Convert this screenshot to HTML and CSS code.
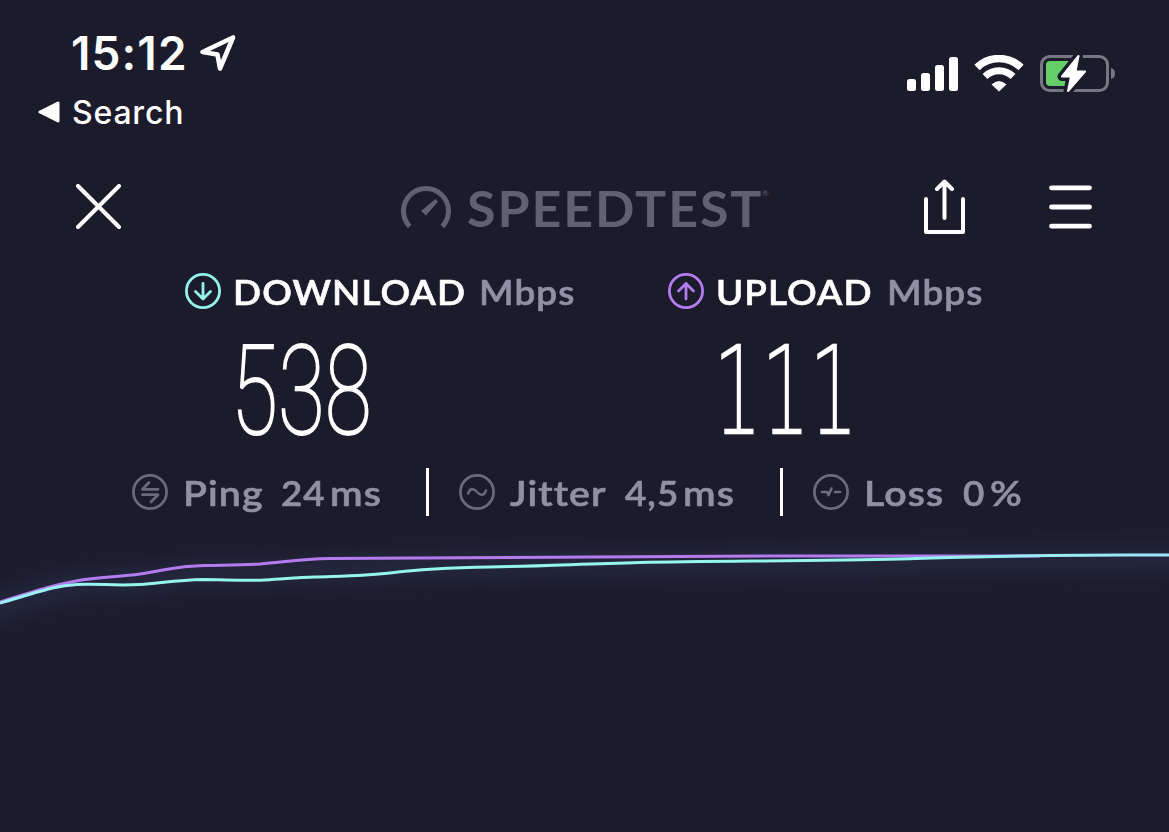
FILE: index.html
```html
<!DOCTYPE html>
<html lang="en">
<head>
    <meta charset="UTF-8">
    <meta name="viewport" content="width=device-width, initial-scale=1.0">
    <title>Speedtest</title>
    <link rel="stylesheet" href="styles.css">
</head>
<body>
    <header class="status-bar">
        <div class="status-left">
            <div class="clock">
                <span class="time">15:12</span>
                <svg class="location" width="38" height="38" viewBox="0 0 38 38"><path d="M3.500 18L34 3.500L21 34.500L18.500 20.500Z" fill="none" stroke="#fff" stroke-width="4.600" stroke-linejoin="round"/></svg>
            </div>
            <div class="back">
                <svg width="22" height="22" viewBox="0 0 22 22"><path d="M2 11L20 2V20Z" fill="#fff" stroke="#fff" stroke-width="3" stroke-linejoin="round"/></svg>
                <span class="back-label">Search</span>
            </div>
        </div>
        <div class="status-right">
            <svg width="52" height="35" viewBox="0 0 52 35" fill="#fff">
                <rect x="0" y="22" width="9" height="12" rx="2.500"/>
                <rect x="14" y="16" width="9" height="18" rx="2.500"/>
                <rect x="28" y="8" width="9" height="26" rx="2.500"/>
                <rect x="42" y="0" width="9" height="34" rx="2.500"/>
            </svg>
            <svg class="wifi" width="50" height="37" viewBox="0 0 50 37" fill="none" stroke="#fff">
                <path d="M3 12.500A31.500 31.500 0 0 1 47 12.500" stroke-width="7.500"/>
                <path d="M11 21.500A20 20 0 0 1 39 21.500" stroke-width="7"/>
                <path d="M17.500 29.500Q25 22.500 32.500 29.500L25 36.500Z" fill="#fff" stroke="none"/>
            </svg>
            <svg class="battery" width="76" height="40" viewBox="0 0 76 40">
                <rect x="1.500" y="4.500" width="66" height="34" rx="8" fill="none" stroke="#777685" stroke-width="3"/>
                <path d="M71 16Q75 17 75 21.500Q75 26 71 27Z" fill="#777685"/>
                <rect x="6" y="9" width="25" height="25" rx="4" fill="#65cf67"/>
                <path d="M38.500 4L22 24.500H31L28 39L45 19.500H35.500Z" fill="#fff" stroke="#1b1b2c" stroke-width="9" stroke-linejoin="round"/>
                <path d="M38.500 4L22 24.500H31L28 39L45 19.500H35.500Z" fill="#fff" stroke="#fff" stroke-width="2" stroke-linejoin="round"/>
            </svg>
        </div>
    </header>

    <nav class="toolbar">
        <svg class="close" width="46" height="46" viewBox="0 0 46 46" stroke="#fff" stroke-width="4" stroke-linecap="round"><path d="M2 2L43 43M43 2L2 43"/></svg>
        <div class="logo">
            <svg width="50" height="44" viewBox="0 0 50 44">
                <path d="M8.700 41.500A22.500 22.500 0 1 1 41.300 41.500" fill="none" stroke="#616073" stroke-width="5"/>
                <path d="M34.500 14L37 16.500L25 30.500L20 26Z" fill="#616073"/>
            </svg>
            <span class="logo-text">SPEEDTEST</span><span class="reg">®</span>
        </div>
        <svg class="share" width="42" height="56" viewBox="0 0 42 56" fill="none" stroke="#fff" stroke-width="4" stroke-linecap="round" stroke-linejoin="round"><path d="M2 20V53H39V20M20.500 39V3M13 10L20.500 2.500L28 10"/></svg>
        <svg class="menu" width="44" height="44" viewBox="0 0 44 44" stroke="#fff" stroke-width="4.800" stroke-linecap="round"><path d="M2.500 2.800H40.500M2.500 22H40.500M2.500 41.200H40.500"/></svg>
    </nav>

    <main>
        <section class="results">
            <div class="result">
                <h2>
                    <svg width="36" height="36" viewBox="0 0 36 36" fill="none" stroke="#93f5ec" stroke-width="2.800" stroke-linecap="round" stroke-linejoin="round"><circle cx="18" cy="18" r="16.600"/><path d="M18 10.500V26M10.500 18.500L18 26L25.500 18.500"/></svg>
                    <span class="name download">DOWNLOAD</span>
                    <span class="unit">Mbps</span>
                </h2>
                <div class="value"><span class="digits">538</span></div>
            </div>
            <div class="result">
                <h2>
                    <svg width="36" height="36" viewBox="0 0 36 36" fill="none" stroke="#b37bef" stroke-width="2.800" stroke-linecap="round" stroke-linejoin="round"><circle cx="18" cy="18" r="16.600"/><path d="M18 26V10.500M10.500 18L18 10.500L25.500 18"/></svg>
                    <span class="name upload">UPLOAD</span>
                    <span class="unit">Mbps</span>
                </h2>
                <div class="value"><span class="digits ones">111</span></div>
            </div>
        </section>

        <section class="stats">
            <div class="stat ping">
                <svg width="36" height="36" viewBox="0 0 36 36" fill="none" stroke="#6b6a7c" stroke-width="2.700" stroke-linecap="round" stroke-linejoin="round"><circle cx="18" cy="18" r="16.600"/><path d="M17 8.500L10.500 15.300H26M10.500 20.700H26L19 28" stroke-width="2.700"/></svg>
                <span class="label">Ping</span>
                <span class="num">24</span>
                <span class="small">ms</span>
            </div>
            <div class="stat jitter">
                <svg width="36" height="36" viewBox="0 0 36 36" fill="none" stroke="#6b6a7c" stroke-width="2.700" stroke-linecap="round"><circle cx="18" cy="18" r="16.600"/><path d="M9 19.500C11 13.500 15 14.500 18 18S25 22.500 27 16.500" stroke-width="2.400"/></svg>
                <span class="label">Jitter</span>
                <span class="num">4,5</span>
                <span class="small">ms</span>
            </div>
            <div class="stat loss">
                <svg width="36" height="36" viewBox="0 0 36 36" fill="none" stroke="#6b6a7c" stroke-width="2.700" stroke-linecap="round" stroke-linejoin="round"><circle cx="18" cy="18" r="16.600"/><path d="M9 18H14L15.500 21L18.500 14.500M22 18H27" stroke-width="2.700"/></svg>
                <span class="label">Loss</span>
                <span class="num">0</span>
                <span class="small">%</span>
            </div>
        </section>

        <svg class="chart" width="1169" height="302" viewBox="0 530 1169 302" fill="none">
            <defs>
                <filter id="glow" filterUnits="userSpaceOnUse" x="-60" y="480" width="1290" height="200"><feGaussianBlur stdDeviation="11"/></filter>
                <linearGradient id="down" gradientUnits="userSpaceOnUse" x1="0" y1="0" x2="1169" y2="0">
                    <stop offset="0" stop-color="#9defff"/>
                    <stop offset=".1" stop-color="#93f5ec"/>
                    <stop offset=".75" stop-color="#93f5ec"/>
                    <stop offset="1" stop-color="#9be5f8"/>
                </linearGradient>
            </defs>
            <path d="M-40 618L0 606C45 592 65 586 85 584C160 584 160 576 200 574C260 576 280 572 310 571C380 571 400 568 460 566C600 563 900 562 1000 560L1210 559" stroke="#50608c" stroke-width="26" opacity=".2" filter="url(#glow)"/>
            <path d="M0 602C45 588 55 585 76 581C98 577 120 577 140 574C168 570 175 566 205 565.500C225 565 240 565 260 564C285 562 300 559 330 558.500C430 557.500 650 556 850 556H1040" stroke="#b37bef" stroke-width="3"/>
            <path d="M0 603C45 590 55 586 77 584.500C98 583.500 115 586 140 584.500C160 583 180 580 202 579.500C225 579.500 240 581 265 580C285 579 295 577.500 315 577C345 576 365 576 390 573C420 569 450 567.500 490 567C545 566 580 564 640 562.500C720 561 820 561 900 559C950 557.500 990 556 1050 555.500C1080 555 1130 555 1169 555" stroke="url(#down)" stroke-width="3"/>
        </svg>
    </main>
</body>
</html>
```

FILE: styles.css
```css
* {
    box-sizing: border-box;
}
body {
    margin: 0;
    height: 832px;
    overflow: hidden;
    background-color: #1b1b2c;
    color: #fff;
    font-family: Lato, sans-serif;
}
svg {
    display: block;
    flex: none;
}
span {
    white-space: nowrap;
}
.status-bar {
    display: flex;
    justify-content: space-between;
    height: 165px;
    padding: 29px 53px 0 38px;
    font-family: Inter, sans-serif;
}
.clock {
    display: flex;
    align-items: center;
    height: 48px;
    padding-left: 33px;
}
.time {
    width: 128px;
    font-size: 46px;
    font-weight: 600;
    letter-spacing: 1.1px;
}
.back {
    display: flex;
    align-items: center;
    gap: 12px;
    height: 36px;
    margin-top: 17px;
}
.back-label {
    font-size: 32px;
    font-weight: 500;
    letter-spacing: .8px;
}
.status-right {
    display: flex;
    align-items: flex-end;
    height: 63px;
}
.wifi {
    margin-left: 15px;
}
.battery {
    margin-left: 16px;
}
.toolbar {
    display: flex;
    align-items: center;
    height: 84px;
    padding-left: 76px;
}
.logo {
    display: flex;
    align-items: center;
    width: 368px;
    height: 50px;
    margin-left: 279px;
    color: #616073;
}
.logo-text {
    width: 294px;
    margin: 2px 0 0 16px;
    font-size: 49px;
    font-weight: 700;
    letter-spacing: 1.8px;
    transform: scaleX(1.06);
    transform-origin: left;
}
.reg {
    font-size: 8px;
    margin: -28px 0 0 1px;
}
.share {
    margin-left: 155px;
}
.menu {
    margin-left: 83px;
}
.results {
    display: grid;
    grid-template-columns: 483px 483px;
    padding-left: 185px;
    height: 217px;
}
.result h2 {
    display: flex;
    align-items: center;
    height: 36px;
    margin: 24px 0 0;
    font-size: 35px;
    font-weight: 600;
    letter-spacing: 1px;
    -webkit-text-stroke: .6px;
}
.name, .unit {
    margin-top: -1px;
    transform: scaleX(1.055);
    transform-origin: left;
}
.name {
    margin-left: 12px;
}
.download {
    width: 246px;
}
.upload {
    width: 171px;
}
.unit {
    color: #9090a5;
}
.value {
    height: 120px;
    margin: 22px 0 0 50px;
}
.digits {
    display: inline-block;
    margin-left: -4px;
    font-family: Roboto, sans-serif;
    font-size: 84px;
    font-weight: 100;
    line-height: 120px;
    -webkit-text-stroke: 1.3px #fff;
    transform: translateY(1px) scale(1.02, 1.49);
    transform-origin: left center;
}
.ones {
    margin-left: -5px;
    font-family: "DejaVu Sans", sans-serif;
    font-size: 123px;
    font-weight: 200;
    letter-spacing: -2px;
    -webkit-text-stroke: .5px #fff;
    transform: translateY(1px) scaleX(.63);
}
.stats {
    display: flex;
    align-items: center;
    height: 52px;
    padding-left: 132px;
    color: #9090a5;
    font-size: 35px;
    font-weight: 600;
    letter-spacing: 1px;
    -webkit-text-stroke: .6px;
}
.stat {
    display: flex;
    align-items: center;
    height: 48px;
}
.stat + .stat {
    border-left: 3px solid #fff;
    padding-left: 30px;
}
.ping {
    width: 294px;
}
.jitter {
    width: 354px;
}
.label, .small {
    transform: scaleX(1.12);
    transform-origin: left;
}
.label {
    margin-left: 15px;
}
.ping .label {
    width: 98px;
}
.jitter .label {
    width: 115px;
}
.loss .label {
    width: 99px;
}
.num {
    transform: scaleX(1.05);
    transform-origin: left;
}
.small {
    margin-left: 6px;
}
.chart {
    margin-top: 12px;
}
```
